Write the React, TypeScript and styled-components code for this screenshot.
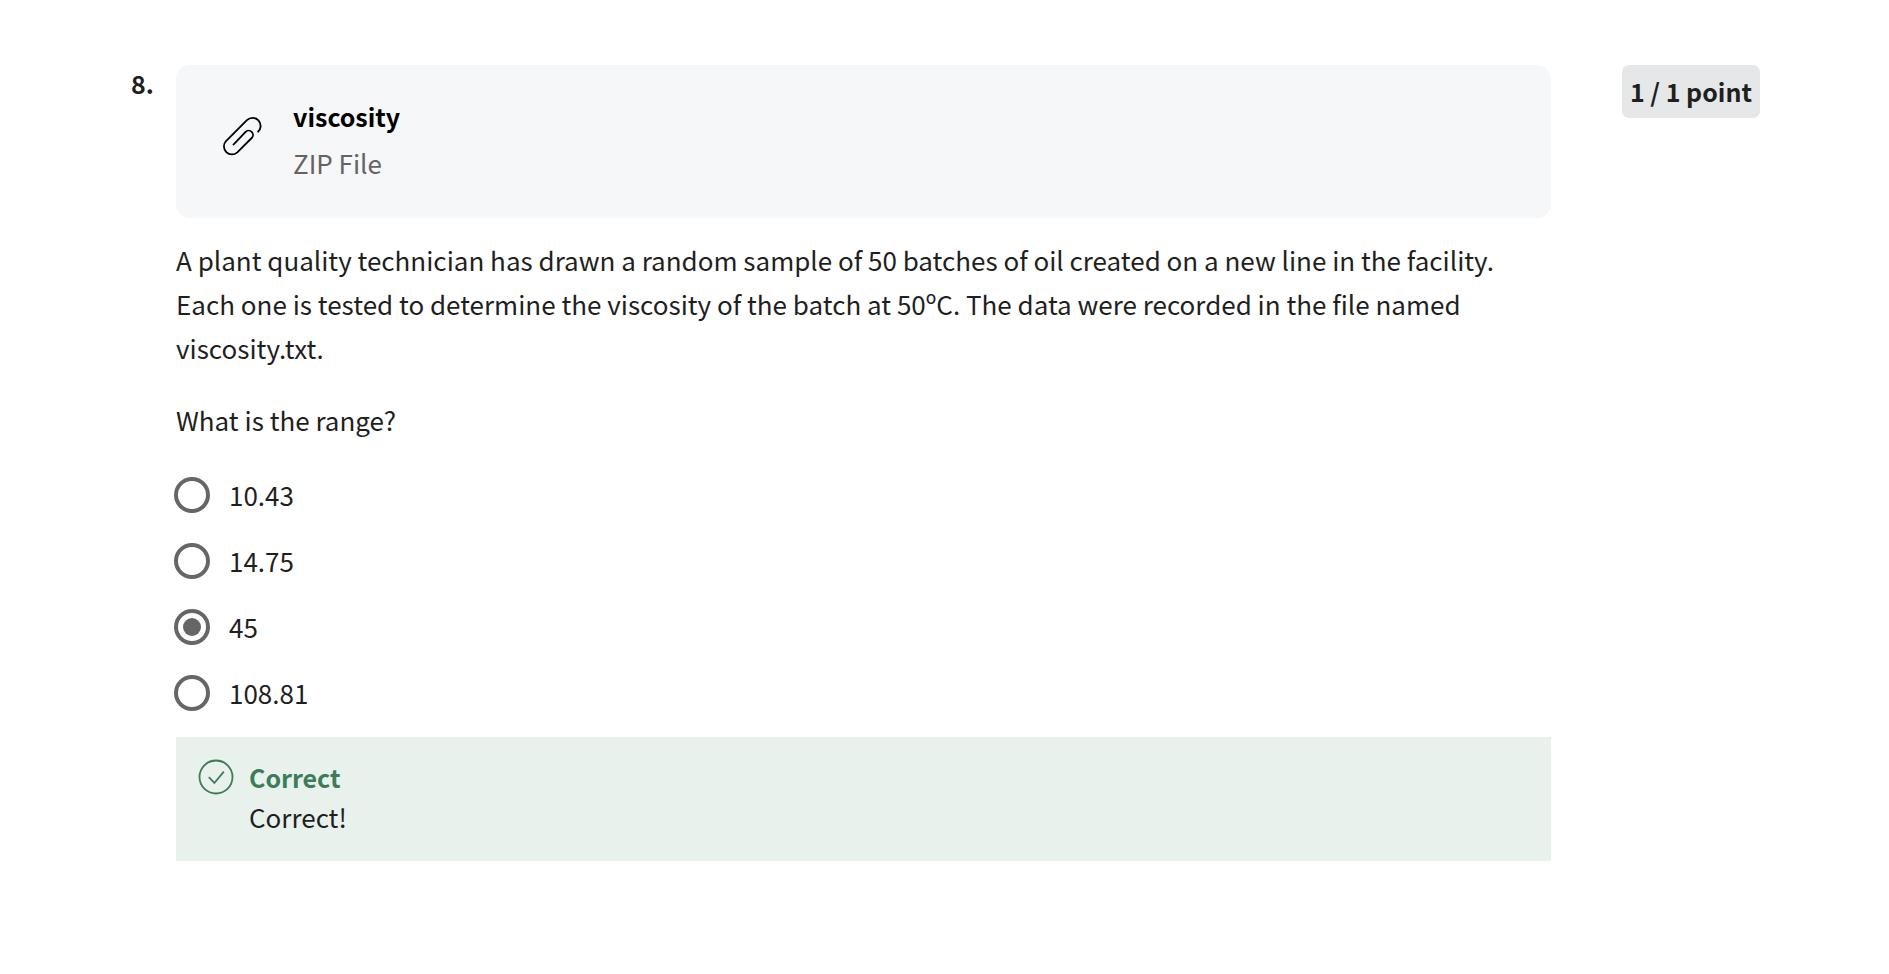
import React from 'react';
import styled, { createGlobalStyle } from 'styled-components';

const Global = createGlobalStyle`
  *, *::before, *::after { box-sizing: border-box; }
  body {
    margin: 0;
    background: #fff;
    color: #1f1f1f;
    font-family: "Noto Sans CJK SC", "Noto Sans", sans-serif;
    font-size: 26px;
    line-height: 44px;
  }
`;

const Page = styled.main`
  display: flex;
  align-items: flex-start;
  padding: 65px 129px 96px 131px;
`;

const QuestionNumber = styled.div`
  flex: 0 0 45px;
  font-size: 25px;
  line-height: 36px;
  font-weight: 700;
`;

const Content = styled.section`
  flex: 1;
  min-width: 0;
`;

const Points = styled.div`
  margin-left: 71px;
  padding: 4px 8px 5px;
  border-radius: 7px;
  background: #e5e7e8;
  font-size: 25px;
  font-weight: 700;
  white-space: nowrap;
`;

const Attachment = styled.a`
  display: flex;
  align-items: flex-start;
  gap: 29px;
  padding: 27px 44px 32px;
  border-radius: 14px;
  background: #f5f7f9;
  color: inherit;
  text-decoration: none;
`;

const IconSlot = styled.span<{ $height: number }>`
  display: flex;
  flex: none;
  align-items: center;
  height: ${({ $height }) => $height}px;
`;

const FileName = styled.div`
  color: #000;
  font-size: 25px;
  font-weight: 700;
  line-height: 48px;
`;

const FileType = styled.div`
  color: #636363;
  line-height: 46px;
`;

const Prompt = styled.div`
  display: grid;
  gap: 28px;
  padding: 20px 0;

  p {
    margin: 0;
  }
`;

const Choices = styled.fieldset`
  margin: 0 0 11px;
  padding: 0;
  border: 0;
`;

const Choice = styled.label`
  display: flex;
  align-items: center;
  gap: 19px;
  height: 66px;
`;

const Radio = styled.input`
  appearance: none;
  flex: none;
  display: grid;
  place-items: center;
  width: 36px;
  height: 36px;
  margin: 0 0 0 -2px;
  border: 4px solid #666;
  border-radius: 50%;

  &:checked::before {
    content: '';
    width: 18px;
    height: 18px;
    border-radius: 50%;
    background: #666;
  }
`;

const Feedback = styled.div`
  display: flex;
  align-items: flex-start;
  gap: 15px;
  padding: 20px 22px 24px;
  background: #e9f1ed;
  line-height: 40px;
`;

const Verdict = styled.div`
  color: #3b7d58;
  font-size: 25px;
  font-weight: 700;
`;

const PaperclipIcon = () => (
  <svg width="44" height="44" viewBox="0 0 44 44" fill="none" stroke="#000" strokeWidth="1.8" aria-hidden="true">
    <path d="M37.6 18.2A8 8 0 0 0 38.2 6.2A8 8 0 0 0 26.9 6.2L6 27A8 8 0 0 0 17.3 38.3L31.7 24A4.3 4.3 0 0 0 25.6 17.9L13 31.2" />
  </svg>
);

const CheckCircleIcon = () => (
  <svg width="36" height="36" viewBox="0 0 36 36" fill="none" stroke="#3b7d58" strokeWidth="1.8" aria-hidden="true">
    <circle cx="18" cy="18" r="16.5" />
    <path d="M10.8 18.2 16.4 24 25.8 12.6" />
  </svg>
);

const choices = ['10.43', '14.75', '45', '108.81'];

export default function App() {
  return (
    <>
      <Global />
      <Page>
        <QuestionNumber>8.</QuestionNumber>
        <Content>
          <Attachment href="#viscosity">
            <IconSlot $height={88}>
              <PaperclipIcon />
            </IconSlot>
            <div>
              <FileName>viscosity</FileName>
              <FileType>ZIP File</FileType>
            </div>
          </Attachment>
          <Prompt>
            <p>
              A plant quality technician has drawn a random sample of 50 batches of oil created on a new line in the
              facility. Each one is tested to determine the viscosity of the batch at 50ºC. The data were recorded in
              the file named viscosity.txt.
            </p>
            <p id="question">What is the range?</p>
          </Prompt>
          <Choices aria-labelledby="question">
            {choices.map((value) => (
              <Choice key={value}>
                <Radio type="radio" name="range" value={value} defaultChecked={value === '45'} />
                {value}
              </Choice>
            ))}
          </Choices>
          <Feedback>
            <IconSlot $height={40}>
              <CheckCircleIcon />
            </IconSlot>
            <div>
              <Verdict>Correct</Verdict>
              <div>Correct!</div>
            </div>
          </Feedback>
        </Content>
        <Points>1 / 1 point</Points>
      </Page>
    </>
  );
}
